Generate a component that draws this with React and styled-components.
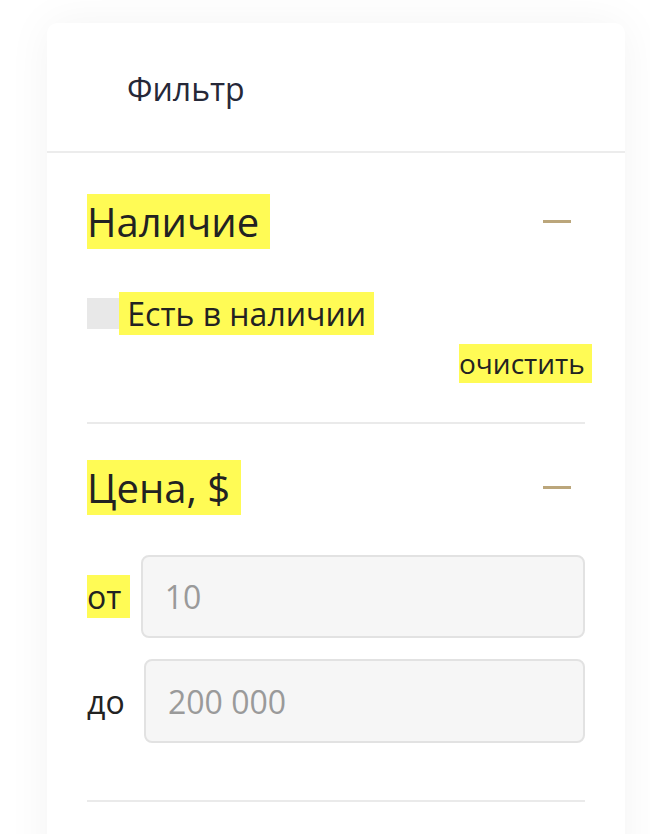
import React from 'react';
import styled, { createGlobalStyle } from 'styled-components';

const GlobalStyle = createGlobalStyle`
  html, body {
    margin: 0;
    padding: 0;
    background: #ffffff;
  }
  body {
    font-family: "Open Sans", "Noto Sans", sans-serif;
    color: #222222;
  }
  * {
    box-sizing: border-box;
  }
`;

const Page = styled.div`
  padding: 23px 25px 0 47px;
`;

const Card = styled.div`
  width: 578px;
  min-height: 860px;
  background: #ffffff;
  border-radius: 10px 10px 0 0;
  box-shadow: 0 0 45px rgba(0, 0, 0, 0.05);
`;

const Header = styled.div`
  height: 130px;
  padding: 44px 0 0 80px;
  border-bottom: 2px solid #ececec;
  font-size: 32px;
  color: #262838;
`;

const Section = styled.div`
  padding: ${(p) => p.$top}px 40px 0;
`;

const TitleRow = styled.div`
  display: flex;
  align-items: center;
  justify-content: space-between;
  height: ${(p) => p.$h}px;
  margin-top: ${(p) => p.$top || 0}px;
`;

const Mark = styled.span`
  background: #fffb55;
  white-space: pre;
  font-size: ${(p) => p.$size}px;
  line-height: normal;
`;

const Minus = styled.button`
  width: 28px;
  height: 3px;
  margin-right: 14px;
  padding: 0;
  border: 0;
  background: #bba67b;
  cursor: pointer;
`;

const CheckRow = styled.label`
  display: flex;
  align-items: center;
  margin-top: 42px;
  height: 45px;
`;

const Box = styled.span`
  width: 32px;
  height: 31px;
  background: #e8e8e8;
`;

const ClearRow = styled.div`
  display: flex;
  justify-content: flex-end;
  margin: 8px -7px 0 0;
  height: 39px;
`;

const Divider = styled.div`
  margin-top: ${(p) => p.$top}px;
  height: 2px;
  background: #eaeaea;
`;

const PriceRow = styled.div`
  display: flex;
  align-items: center;
  gap: 11px;
  margin-top: ${(p) => p.$top}px;
`;

const PlainLabel = styled.span`
  white-space: pre;
  font-size: 32px;
`;

const Field = styled.input`
  flex: 1;
  min-width: 0;
  height: ${(p) => p.$h}px;
  padding: 0 22px;
  border: 2px solid #e2e2e2;
  border-radius: 8px;
  background: #f6f6f6;
  font-family: "Open Sans", sans-serif;
  font-size: 32px;
  color: #222;
  outline: none;
  &::placeholder {
    color: #9a9a9a;
  }
`;

export default function App() {
  return (
    <>
      <GlobalStyle />
      <Page>
        <Card>
          <Header>Фильтр</Header>
          <Section $top={41}>
            <TitleRow $h={55}>
              <Mark $size={40}>Наличие </Mark>
              <Minus aria-label="Свернуть" />
            </TitleRow>
            <CheckRow>
              <Box />
              <Mark $size={32}> Есть в наличии </Mark>
            </CheckRow>
            <ClearRow>
              <Mark $size={28}>очистить </Mark>
            </ClearRow>
            <Divider $top={39} />
            <TitleRow $h={56} $top={35}>
              <Mark $size={40}>Цена, $ </Mark>
              <Minus aria-label="Свернуть" />
            </TitleRow>
            <PriceRow $top={40}>
              <Mark $size={32}>от </Mark>
              <Field $h={83} placeholder="10" />
            </PriceRow>
            <PriceRow $top={21}>
              <PlainLabel>до </PlainLabel>
              <Field $h={84} placeholder="200 000" />
            </PriceRow>
            <Divider $top={57} />
          </Section>
        </Card>
      </Page>
    </>
  );
}
